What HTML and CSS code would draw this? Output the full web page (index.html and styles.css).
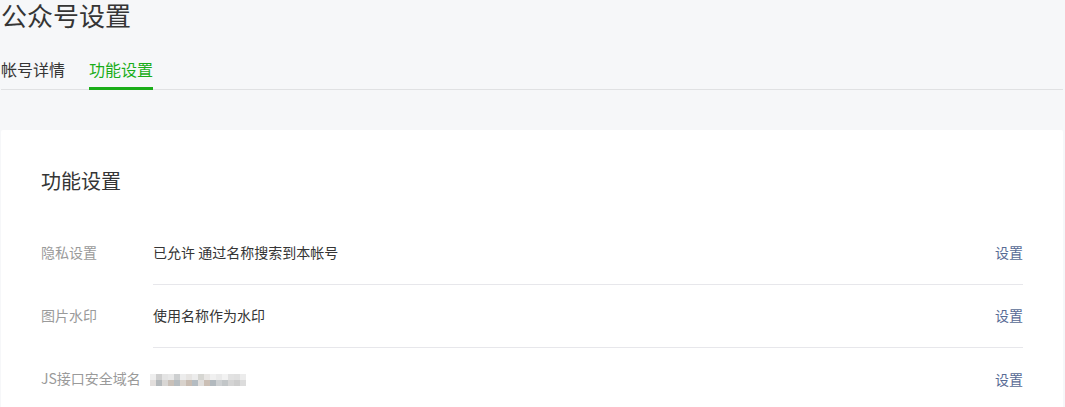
FILE: index.html
```html
<!DOCTYPE html>
<html lang="zh-CN">
<head>
<meta charset="utf-8">
<title>公众号设置</title>
<link rel="stylesheet" href="styles.css">
</head>
<body>
<div class="page">
  <h1 class="page-title">公众号设置</h1>
  <nav class="tabs">
    <a class="tab">帐号详情</a>
    <a class="tab tab-active">功能设置</a>
  </nav>
  <section class="card">
    <h2 class="card-title">功能设置</h2>
    <div class="row">
      <div class="row-label">隐私设置</div>
      <div class="row-body">
        <div class="row-value">已允许 通过名称搜索到本帐号</div>
        <a class="row-action">设置</a>
      </div>
    </div>
    <div class="row">
      <div class="row-label">图片水印</div>
      <div class="row-body">
        <div class="row-value">使用名称作为水印</div>
        <a class="row-action">设置</a>
      </div>
    </div>
    <div class="row">
      <div class="row-label">JS接口安全域名</div>
      <div class="row-body">
        <div class="row-value">
          <div class="mosaic">
            <span style="background:#eeeeee"></span><span style="background:#cfcfcf"></span><span style="background:#e4e4e4"></span><span style="background:#e8e8e8"></span><span style="background:#cdcfd0"></span><span style="background:#ececec"></span><span style="background:#e6e4e2"></span><span style="background:#ececec"></span><span style="background:#d6d6d2"></span><span style="background:#e8e6e4"></span><span style="background:#f0f0f0"></span><span style="background:#eaeaea"></span><span style="background:#f2f2f2"></span><span style="background:#e2e2e2"></span><span style="background:#e0e0e0"></span><span style="background:#ececec"></span>
            <span style="background:#e2dedc"></span><span style="background:#b4b9bc"></span><span style="background:#d8d6d4"></span><span style="background:#c9c0b8"></span><span style="background:#b6bcc0"></span><span style="background:#d8d2cc"></span><span style="background:#c8bcb2"></span><span style="background:#b4bcc2"></span><span style="background:#e0dedc"></span><span style="background:#cbbfb5"></span><span style="background:#b2b9be"></span><span style="background:#cdd0d2"></span><span style="background:#c2c6c8"></span><span style="background:#d4d4d4"></span><span style="background:#cdcdcd"></span><span style="background:#dcdcdc"></span>
          </div>
        </div>
        <a class="row-action">设置</a>
      </div>
    </div>
  </section>
</div>
</body>
</html>
```
FILE: styles.css
```css
* { box-sizing: border-box; }
html, body {
  margin: 0;
  padding: 0;
  background: #f6f7f9;
  font-family: "Noto Sans CJK SC", "Liberation Sans", sans-serif;
  color: #353535;
}
.page {
  width: 1062px;
  margin-left: 1px;
}
.page-title {
  margin: 0;
  font-size: 26px;
  font-weight: 400;
  line-height: 30px;
  height: 32px;
  color: #353535;
}
.tabs {
  display: flex;
  margin-top: 20px;
  border-bottom: 1px solid #e0e1e3;
  height: 38px;
}
.tab {
  display: block;
  font-size: 16px;
  line-height: 34px;
  height: 38px;
  margin-right: 24px;
  color: #353535;
  border-bottom: 2px solid transparent;
}
.tab-active {
  color: #1aad19;
  border-bottom: 3px solid #1aad19;
}
.card {
  margin-top: 40px;
  background: #fff;
  padding: 0 40px 0 40px;
  border-radius: 2px 2px 0 0;
}
.card-title {
  margin: 0;
  padding-top: 36px;
  height: 92px;
  font-size: 20px;
  line-height: 30px;
  font-weight: 400;
  color: #353535;
}
.row {
  display: flex;
  height: 63px;
}
.row-label {
  width: 112px;
  flex: none;
  font-size: 14px;
  color: #9a9a9a;
  display: flex;
  align-items: center;
  padding-bottom: 3px;
  white-space: nowrap;
}
.row-body {
  flex: 1;
  display: flex;
  align-items: center;
  justify-content: space-between;
  border-bottom: 1px solid #e7e7eb;
  padding-bottom: 2px;
  font-size: 14px;
}
.row:last-child .row-body { border-bottom: none; }
.row-value { color: #353535; }
.row-action { color: #576b95; }
.mosaic {
  display: grid;
  grid-template-columns: repeat(16, 6px);
  grid-template-rows: repeat(2, 6px);
  margin-left: -3px;
  margin-top: 2px;
}
.mosaic span { display: block; }
```
